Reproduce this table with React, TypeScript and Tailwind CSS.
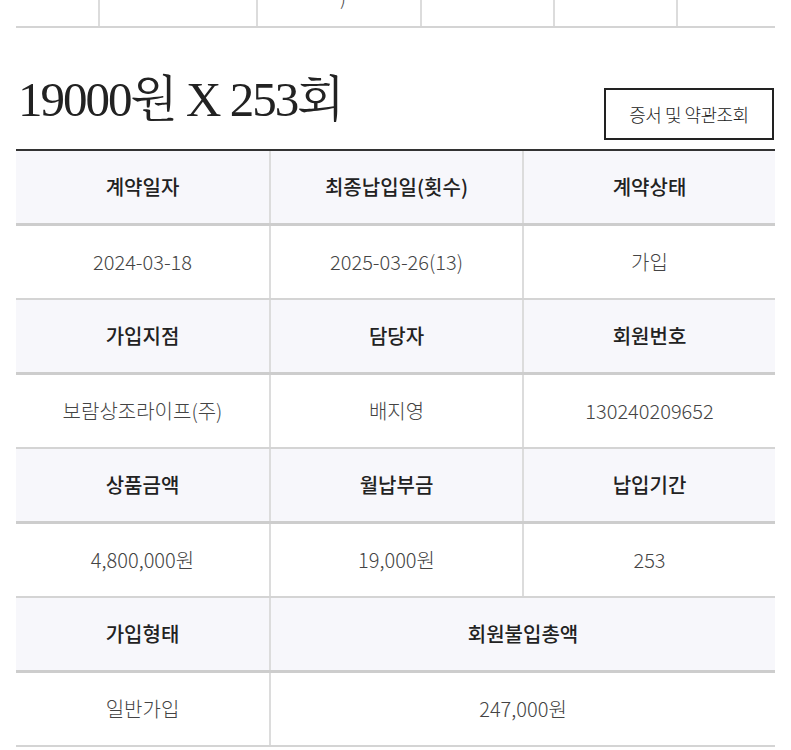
import React from 'react';

// One row of the detail table: a label row followed by a value row
interface Field {
  label: string;
  value: string;
  span?: boolean;
}

const rows: Field[][] = [
  [
    { label: '계약일자', value: '2024-03-18' },
    { label: '최종납입일(횟수)', value: '2025-03-26(13)' },
    { label: '계약상태', value: '가입' },
  ],
  [
    { label: '가입지점', value: '보람상조라이프(주)' },
    { label: '담당자', value: '배지영' },
    { label: '회원번호', value: '130240209652' },
  ],
  [
    { label: '상품금액', value: '4,800,000원' },
    { label: '월납부금', value: '19,000원' },
    { label: '납입기간', value: '253' },
  ],
  [
    { label: '가입형태', value: '일반가입' },
    { label: '회원불입총액', value: '247,000원', span: true },
  ],
];

const sans = "font-['Noto_Sans_CJK_KR','Noto_Sans',sans-serif]";

const App: React.FC = () => {
  return (
    <div className={`w-[791px] h-[750px] overflow-hidden bg-white ${sans}`}>
      {/* tail of the previous table, cut off at the top */}
      <div className="mx-4 h-[28px] grid grid-cols-[82px_158px_164px_133px_123px_1fr] border-b-2 border-[#d4d4d4]">
        <div />
        <div className="border-l-2 border-[#dcdcdc]" />
        <div className="border-l-2 border-[#dcdcdc] relative overflow-hidden">
          <span className="absolute left-[82px] -top-[17px] text-[19px] font-light text-[#444]">)</span>
        </div>
        <div className="border-l-2 border-[#dcdcdc]" />
        <div className="border-l-2 border-[#dcdcdc]" />
        <div className="border-l-2 border-[#dcdcdc]" />
      </div>

      {/* title line */}
      <div className="mx-4 mt-[46px] flex items-end justify-between">
        <h1 className="mb-[14px] pl-[2px] text-[49px] leading-[52px] tracking-[-2px] text-[#222] font-['Liberation_Serif','Noto_Serif_CJK_KR','Noto_Sans_CJK_KR',serif]">
          19000원 X 253회
        </h1>
        <button className="mr-[1px] w-[170px] h-[52px] border-2 border-[#222] bg-white text-[18px] font-light text-[#222] tracking-[-0.5px]">
          증서 및 약관조회
        </button>
      </div>

      {/* detail table */}
      <div className="mx-4 mt-[9px] border-t-2 border-[#333]">
        {rows.map((row, i) => (
          <div key={i}>
            <div className="grid grid-cols-3 h-[75px] bg-[#f7f7fb] border-b-[3px] border-[#cdcdcd]">
              {row.map((f, j) => (
                <div
                  key={f.label}
                  className={`flex items-center justify-center text-[20px] font-medium text-[#222] ${j > 0 ? 'border-l-2 border-[#dcdcdc]' : ''} ${f.span ? 'col-span-2' : ''}`}
                >
                  {f.label}
                </div>
              ))}
            </div>
            <div className="grid grid-cols-3 h-[74px] bg-white border-b-2 border-[#d4d4d4]">
              {row.map((f, j) => (
                <div
                  key={f.label}
                  className={`flex items-center justify-center text-[20px] font-light text-[#444] ${j > 0 ? 'border-l-2 border-[#dcdcdc]' : ''} ${f.span ? 'col-span-2' : ''}`}
                >
                  {f.value}
                </div>
              ))}
            </div>
          </div>
        ))}
      </div>
    </div>
  );
};

export default App;
